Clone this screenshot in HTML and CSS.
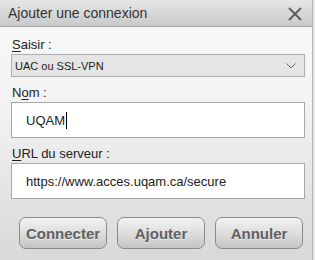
FILE: index.html
```html
<!DOCTYPE html>
<html lang="fr">
<head>
  <meta charset="UTF-8">
  <title>Ajouter une connexion</title>
  <link rel="stylesheet" href="styles.css">
</head>
<body>
  <div class="dialog">
    <div class="titlebar">
      <span class="title">Ajouter une connexion</span>
      <svg class="close" width="14" height="14" viewBox="0 0 14 14">
        <path d="M1 1 L13 13 M13 1 L1 13" stroke="#5a5a5a" stroke-width="1.8" fill="none"/>
      </svg>
    </div>
    <div class="content">
      <label class="label"><u>S</u>aisir :</label>
      <div class="select">
        <span>UAC ou SSL-VPN</span>
        <svg width="10" height="6" viewBox="0 0 10 6">
          <path d="M0.5 0.5 L5 5 L9.5 0.5" stroke="#666" stroke-width="1" fill="none"/>
        </svg>
      </div>
      <label class="label">N<u>o</u>m :</label>
      <div class="field">UQAM<span class="caret"></span></div>
      <label class="label"><u>U</u>RL du serveur :</label>
      <div class="field">https://www.acces.uqam.ca/secure</div>
      <div class="buttons">
        <button>Connecter</button>
        <button>Ajouter</button>
        <button>Annuler</button>
      </div>
    </div>
  </div>
</body>
</html>
```
FILE: styles.css
```css
body {
  margin: 0;
  padding: 0;
  background: #e6e6e6;
  font-family: "Liberation Sans", Arial, sans-serif;
  color: #222;
}
.dialog {
  width: 313px;
  height: 260px;
  box-sizing: border-box;
  border-right: 1px solid #b4b4b4;
  display: flex;
  flex-direction: column;
  background: linear-gradient(#f8f8f8, #f3f3f3 40%, #d8d8d8);
}
.titlebar {
  height: 27px;
  box-sizing: border-box;
  border-bottom: 1px solid #a6a6a6;
  background: linear-gradient(#e6e6e6, #c9c9c9);
  display: flex;
  align-items: center;
  justify-content: space-between;
  padding: 0 10px 0 8px;
}
.title {
  font-size: 14px;
  color: #333;
}
.close {
  margin-top: 1px;
}
.content {
  display: flex;
  flex-direction: column;
  padding: 10px 7px 0 11px;
}
.label {
  font-size: 13px;
  color: #222;
  line-height: 15px;
  padding-left: 1px;
  margin-bottom: 2px;
}
.label u {
  text-underline-offset: 2px;
}
.select {
  height: 23px;
  box-sizing: border-box;
  border: 1px solid #adadad;
  background: #e5e5e5;
  display: flex;
  align-items: center;
  justify-content: space-between;
  padding: 0 8px 0 3px;
  font-size: 11px;
  margin-bottom: 8px;
}
.field {
  height: 36px;
  box-sizing: border-box;
  border: 1px solid #a8a8a8;
  background: #fff;
  display: flex;
  align-items: center;
  padding-left: 14px;
  font-size: 13px;
  color: #222;
  margin-bottom: 8px;
}
.caret {
  display: inline-block;
  width: 1px;
  height: 17px;
  background: #000;
  margin-left: 1px;
}
.buttons {
  display: flex;
  gap: 10px;
  padding: 10px 0 0 8px;
}
button {
  width: 88px;
  height: 32px;
  border: 1px solid #8a8a8a;
  border-radius: 7px;
  background: linear-gradient(#f2f2f2, #dedede 50%, #c4c4c4);
  font-family: "Liberation Sans", Arial, sans-serif;
  font-weight: bold;
  font-size: 15px;
  color: #606060;
  text-shadow: 0 1px 0 rgba(255, 255, 255, 0.5);
  padding: 0;
}
```
